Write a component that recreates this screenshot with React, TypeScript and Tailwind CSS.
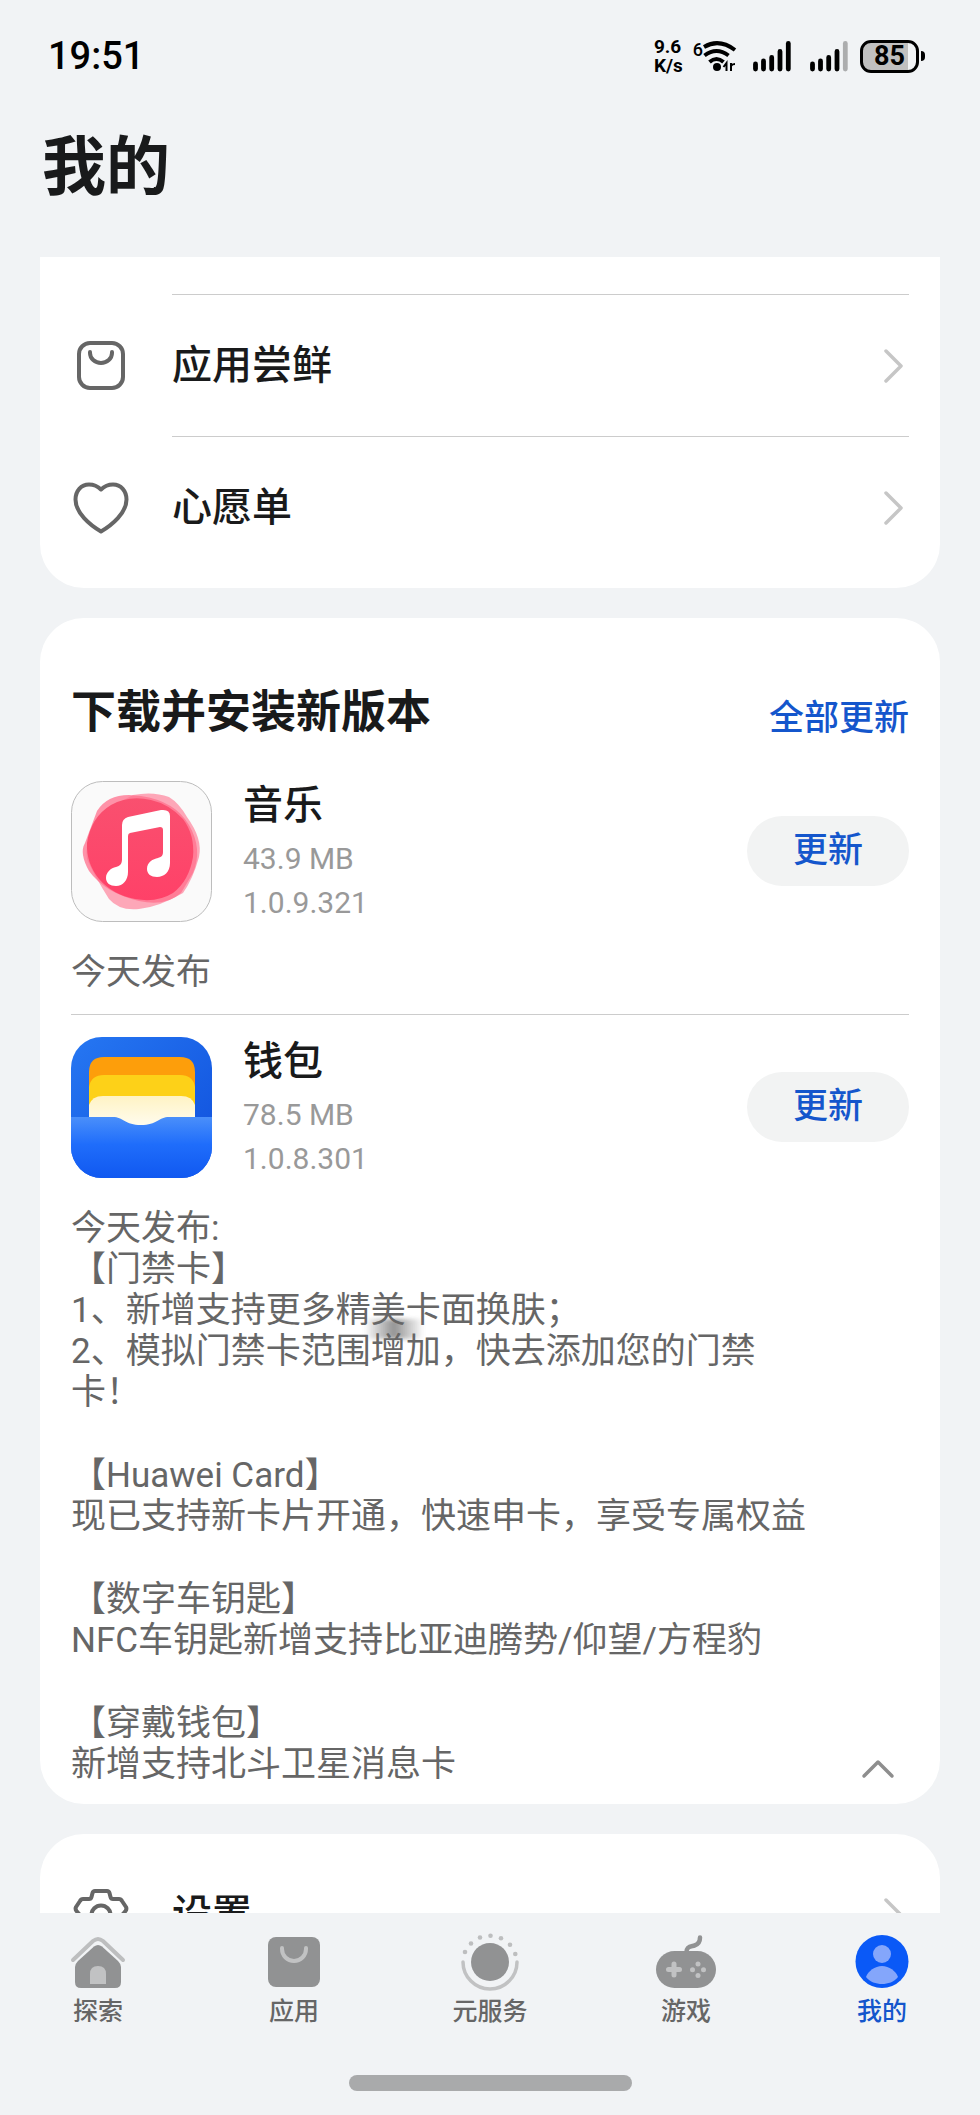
import React, { useState } from 'react'

const BagIcon = () => (
  <svg className="size-14" viewBox="0 0 56 56" fill="none" stroke="#666" strokeWidth="4" strokeLinecap="round">
    <rect x="6" y="6" width="44" height="45" rx="11" />
    <path d="M17 15v1a11 10 0 0 0 22 0v-1" />
  </svg>
)

const HeartIcon = () => (
  <svg className="size-14" viewBox="0 0 56 56" fill="none" stroke="#666" strokeWidth="4" strokeLinejoin="round">
    <path d="M28 10.500C24.500 7 20.500 5.500 16 5.500 8 5.500 2.500 12 2.500 20.500 2.500 34 17 46 28 52.500 39 46 53.500 34 53.500 20.500 53.500 12 48 5.500 40 5.500c-4.500 0-8.500 1.500-12 5z" />
  </svg>
)

const GearIcon = () => (
  <svg className="size-14" viewBox="0 0 56 56" fill="none" stroke="#666" strokeWidth="4" strokeLinejoin="round">
    <path d="M22 4h12q2 0 2.500 2l1 4q.5 2 2.500 2h6q2 0 3 2l4 6q1 2-.5 4L50 27q-1 1 0 2l2.500 3q1.500 2 .5 4l-4 6q-1 2-3 2h-6q-2 0-2.500 2l-1 4q-.5 2-2.500 2H22q-2 0-2.500-2l-1-4q-.5-2-2.500-2h-6q-2 0-3-2l-4-6q-1-2 .5-4L6 29q1-1 0-2l-2.500-3Q2 22 3 20l4-6q1-2 3-2h6q2 0 2.500-2l1-4Q20 4 22 4z" />
    <circle cx="28" cy="28" r="9.500" />
  </svg>
)

const Chevron = () => (
  <svg className="w-5 h-9 mr-1.5 shrink-0" viewBox="0 0 20 36" fill="none" stroke="#c6c6c6" strokeWidth="3.500" strokeLinecap="round" strokeLinejoin="round">
    <path d="M3 3l15 15L3 33" />
  </svg>
)

const MusicLogo = () => (
  <svg className="size-[141px] shrink-0" viewBox="0 0 141 141">
    <defs>
      <linearGradient id="musicRed" x1="0" y1="0" x2="0" y2="1">
        <stop offset="0" stopColor="#f9506f" />
        <stop offset="1" stopColor="#ff4168" />
      </linearGradient>
    </defs>
    <rect x=".5" y=".5" width="140" height="140" rx="31" fill="#fafafa" stroke="#bdbdbd" />
    <path d="M26 30Q36 14 58 14L70 15Q104 20 118 44 132 68 122 92L110 112Q94 126 68 120 34 112 18 90 8 72 14 62z" fill="#ff6f8c" opacity=".75" />
    <path d="M62 14Q82 10 98 16 108 22 116 36 132 58 128 76 122 98 112 112 88 126 68 128 48 130 38 118 24 96 16 78 12 50 40 26z" fill="#ff6f8c" opacity=".6" />
    <path d="M40 24Q58 14 80 19 98 23 112 38 124 54 122 76 118 100 102 112 86 122 64 118 42 114 28 98 15 82 16 62 20 36 40 24z" fill="url(#musicRed)" />
    <path d="M51 44q0-6 6-8l33-7q9-1 9 6v47c0 9-6 14-13 14-6 0-10-3-10-8 0-7 6-10 11-11 3-1 5-2 5-6V49c0-2-1-3-3-3l-30 6q-2 .5-2 3v36c0 8-5 14-12 14-6 0-10-3-10-8 0-6 5-10 10-11 4-1 6-3 6-8z" fill="#fff" />
  </svg>
)

const WalletLogo = () => (
  <svg className="size-[141px] shrink-0" viewBox="0 0 141 141">
    <defs>
      <linearGradient id="walletBack" x1="0" y1="0" x2="1" y2="1">
        <stop offset="0" stopColor="#2677f2" />
        <stop offset="1" stopColor="#0f4fdc" />
      </linearGradient>
      <linearGradient id="walletFront" x1="0" y1="0" x2="0" y2="1">
        <stop offset="0" stopColor="#4a8ffa" />
        <stop offset=".45" stopColor="#1f6dfb" />
        <stop offset="1" stopColor="#1058f0" />
      </linearGradient>
      <linearGradient id="walletCard" x1="0" y1="0" x2="0" y2="1">
        <stop offset="0" stopColor="#fff3c4" />
        <stop offset="1" stopColor="#fffdf3" />
      </linearGradient>
      <clipPath id="walletClip">
        <rect width="141" height="141" rx="31" />
      </clipPath>
    </defs>
    <g clipPath="url(#walletClip)">
      <rect width="141" height="141" fill="url(#walletBack)" />
      <path d="M18 90V35q0-15 15-15h76q15 0 15 15v55z" fill="#fd9e0b" />
      <path d="M18 90V50q2-12 15-12h76q13 0 15 12v40z" fill="#fdd118" />
      <path d="M18 92V68q3-9 14-9h78q11 0 14 9v24z" fill="url(#walletCard)" />
      <path d="M0 80h42c10 0 12 8 28 8s18-8 28-8h43v61H0z" fill="url(#walletFront)" />
    </g>
  </svg>
)

const HomeTab = () => (
  <svg className="size-15" viewBox="0 0 60 60">
    <path d="M5 28L25 9q5-4 10 0l20 19" fill="none" stroke="#bdbebf" strokeWidth="4" strokeLinecap="round" />
    <path d="M26 14.500q4-3 8 0L50 29q3 3 3 6v15q0 6-6 6H13q-6 0-6-6V35q0-3 3-6z" fill="#919293" />
    <path d="M22 52V42q0-8 8-8t8 8v10z" fill="#c1c2c3" />
  </svg>
)

const AppsTab = () => (
  <svg className="size-15" viewBox="0 0 60 60">
    <rect x="4" y="5" width="52" height="50" rx="8" fill="#919293" />
    <path d="M18 16v1a12 12 0 0 0 24 0v-1" fill="none" stroke="#c1c2c3" strokeWidth="4" strokeLinecap="round" />
  </svg>
)

const ServiceTab = () => (
  <svg className="size-15" viewBox="0 0 60 60">
    <circle cx="30" cy="30" r="19" fill="#919293" />
    <path d="M3 30a27 27 0 0 0 54 0" fill="none" stroke="#c1c2c3" strokeWidth="3.500" strokeLinecap="round" />
    <g fill="#bdbebf">
      <circle cx="5" cy="20" r="2.300" />
      <circle cx="11" cy="11.500" r="2.300" />
      <circle cx="20" cy="5.500" r="2.300" />
      <circle cx="30.500" cy="3.700" r="2.300" />
      <circle cx="41" cy="6.300" r="2.300" />
      <circle cx="50" cy="12.700" r="2.300" />
      <circle cx="55.300" cy="22" r="2.300" />
    </g>
  </svg>
)

const GameTab = () => (
  <svg className="size-15" viewBox="0 0 60 60">
    <path d="M30.500 20c0-6 5-5.500 8-6.500 3.500-1 5.500-3 5.500-8" fill="none" stroke="#919293" strokeWidth="4.500" strokeLinecap="round" />
    <rect x="0" y="19" width="60" height="37" rx="18.500" fill="#919293" />
    <path d="M12.500 37.500h11M18 32v11" stroke="#c1c2c3" strokeWidth="5" strokeLinecap="round" />
    <g fill="#c1c2c3">
      <circle cx="42" cy="32" r="2.500" />
      <circle cx="42" cy="43.500" r="2.500" />
      <circle cx="36.500" cy="37.700" r="2.500" />
      <circle cx="47.500" cy="37.700" r="2.500" />
    </g>
  </svg>
)

const MineTab = () => (
  <svg className="size-15" viewBox="0 0 60 60">
    <circle cx="30" cy="29.500" r="26.500" fill="#0a59f7" />
    <circle cx="30" cy="22" r="9" fill="#84a6fb" />
    <path d="M14 45c2-6 9-11 16-11s14 5 16 11c-4 5-10 7-16 7s-12-2-16-7z" fill="#84a6fb" />
  </svg>
)

const SignalBars = ({ weak }: { weak?: boolean }) => (
  <svg className="w-[38px] h-8" viewBox="0 0 38 32" stroke="#000" strokeWidth="4.800" strokeLinecap="round">
    <path d="M2.500 24v5M10.500 21v8M18.700 17.500v11.500M27 11.500v17.500" />
    <path d="M35.300 3.500v25.500" stroke={weak ? '#acadae' : '#000'} />
  </svg>
)

const StatusBar = () => (
  <div className="flex items-center justify-between h-28 pl-12 pr-[55px] text-black">
    <span className="text-[38px] font-medium">19:51</span>
    <div className="flex items-center">
      <div className="text-[19px] leading-[19px] font-bold">
        <div>9.6</div>
        <div>K/s</div>
      </div>
      <span className="ml-2.5 mb-3 text-[18px] leading-5 font-medium">6</span>
      <svg className="w-[34px] h-8" viewBox="0 0 34 32" fill="none" stroke="#000" strokeWidth="4">
        <path d="M1 7q15-9 31 3M1.500 15.500q12-9 24 0M6.500 22q7-6 14 0" />
        <circle cx="14" cy="27" r="4" fill="#000" stroke="none" />
        <path d="M23.500 31v-8l-3 4M28 23v8M28 26q1-2 4-2" strokeWidth="2" />
      </svg>
      <div className="flex gap-[19px] ml-4">
        <SignalBars />
        <SignalBars weak />
      </div>
      <div className="flex items-center gap-0.5 ml-3">
        <div className="flex items-center justify-center w-[59px] h-[33px] border-3 border-black rounded-[11px] bg-linear-to-r from-[#c0c0c0] from-85% to-[#f1f3f5] to-85% text-[27px] leading-none font-bold">
          85
        </div>
        <div className="w-1 h-2.5 bg-black rounded-r-sm" />
      </div>
    </div>
  </div>
)

const MenuRow = ({ icon, label, line }: { icon: React.ReactNode, label: string, line?: boolean }) => (
  <a href="#" className="flex items-center px-[31px]">
    <span className="w-[101px] shrink-0 pl-0.5">{icon}</span>
    <span className={`flex flex-1 items-center justify-between h-[142px] ${line ? 'border-t border-[#cccccc]' : ''}`}>
      <span className="text-[40px] leading-12 font-medium">{label}</span>
      <Chevron />
    </span>
  </a>
)

const AppRow = ({ logo, name, size, version }: { logo: React.ReactNode, name: string, size: string, version: string }) => (
  <div className="flex items-start">
    {logo}
    <div className="flex-1 ml-[31px] text-[30px] leading-11 text-[#999999]">
      <h3 className="mb-1.5 text-[40px] leading-[50px] font-medium text-[#191a1b]">{name}</h3>
      <p>{size}</p>
      <p>{version}</p>
    </div>
    <button className="w-[162px] h-[70px] mt-[35px] rounded-full bg-[#f2f3f3] text-[35px] font-medium text-[#1456cc]">更新</button>
  </div>
)

const walletNotes = [
  ['今天发布:', '【门禁卡】', '1、新增支持更多精美卡面换肤；', '2、模拟门禁卡范围增加，快去添加您的门禁卡！'],
  ['【Huawei Card】', '现已支持新卡片开通，快速申卡，享受专属权益'],
  ['【数字车钥匙】', 'NFC车钥匙新增支持比亚迪腾势/仰望/方程豹'],
  ['【穿戴钱包】', '新增支持北斗卫星消息卡'],
]

const tabs = [
  { name: '探索', icon: <HomeTab /> },
  { name: '应用', icon: <AppsTab /> },
  { name: '元服务', icon: <ServiceTab /> },
  { name: '游戏', icon: <GameTab /> },
  { name: '我的', icon: <MineTab /> },
]

const App = () => {
  const [tab, setTab] = useState('我的')

  return (
    <div lang="zh-CN" className="flex flex-col h-screen bg-[#f1f3f5] text-[#191a1b] font-['Roboto','Noto_Sans_CJK_SC',sans-serif]">
      <StatusBar />
      <h1 className="px-[42px] pt-2 pb-[41px] text-[64px] leading-24 font-bold">我的</h1>

      <main className="flex-1 min-h-0 overflow-y-auto px-10 [scrollbar-width:none]">
        <section className="pt-[37px] pb-2.5 bg-white rounded-b-[44px]">
          <MenuRow icon={<BagIcon />} label="应用尝鲜" line />
          <MenuRow icon={<HeartIcon />} label="心愿单" line />
        </section>

        <section className="mt-[30px] px-[31px] pt-[65px] pb-[19px] bg-white rounded-[44px]">
          <div className="flex items-end justify-between mb-[38px]">
            <h2 className="text-[45px] leading-15 font-bold">下载并安装新版本</h2>
            <button className="text-[35px] leading-12 font-medium text-[#1456cc]">全部更新</button>
          </div>

          <AppRow logo={<MusicLogo />} name="音乐" size="43.9 MB" version="1.0.9.321" />
          <p className="mt-[27px] pb-[21px] border-b border-[#cccccc] text-[35px] leading-[41px] text-[#666666]">今天发布</p>

          <div className="pt-[22px]">
            <AppRow logo={<WalletLogo />} name="钱包" size="78.5 MB" version="1.0.8.301" />
          </div>
          <div className="flex items-end gap-7 mt-[27px]">
            <div className="relative flex flex-1 flex-col gap-[42px] text-[35px] leading-[41px] text-[#666666]">
              {walletNotes.map((block) => (
                <div key={block[0]}>
                  {block.map((line) => <p key={line}>{line}</p>)}
                </div>
              ))}
              {/* touch trail */}
              <div className="absolute left-[293px] top-[111px] w-[60px] h-5 blur-[2px] bg-linear-to-r from-transparent via-[#666666] to-transparent opacity-70" />
            </div>
            <button aria-label="收起" className="flex items-center justify-center w-[62px] h-8">
              <svg className="w-9 h-5" viewBox="0 0 36 20" fill="none" stroke="#8e8e8e" strokeWidth="3.500" strokeLinecap="round" strokeLinejoin="round">
                <path d="M4 17L18 3l14 14" />
              </svg>
            </button>
          </div>
        </section>

        <section className="mt-[30px] py-2.5 bg-white rounded-[44px]">
          <MenuRow icon={<GearIcon />} label="设置" />
        </section>
      </main>

      <nav className="pt-[19px] pb-6">
        <div className="grid grid-cols-5">
          {tabs.map((t) => (
            <button key={t.name} onClick={() => setTab(t.name)} className="flex flex-col items-center gap-1">
              {t.icon}
              <span className={`text-[25px] leading-8 font-medium ${tab === t.name ? 'text-[#1456cc]' : 'text-[#666666]'}`}>{t.name}</span>
            </button>
          ))}
        </div>
        <div className="w-[283px] h-4 mx-auto mt-[47px] rounded-full bg-[#a9aaab]" />
      </nav>
    </div>
  )
}

export default App
